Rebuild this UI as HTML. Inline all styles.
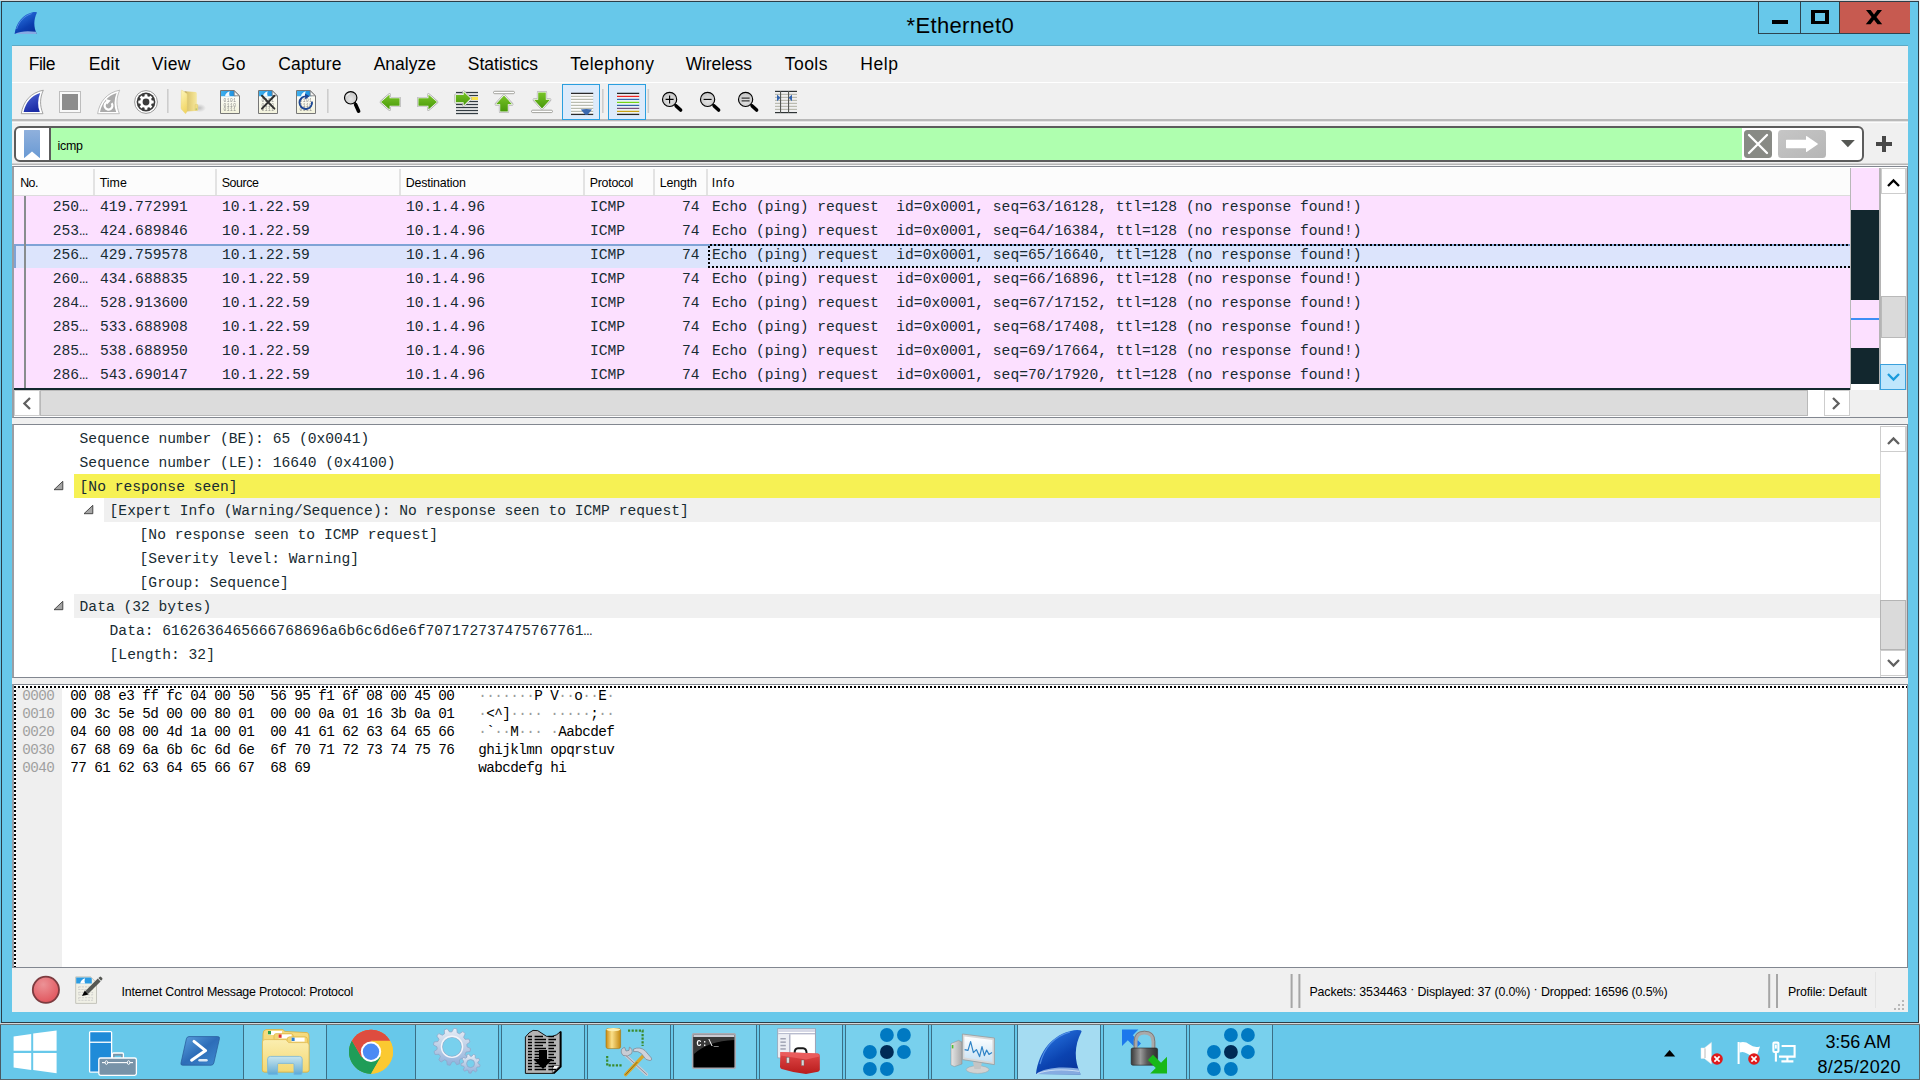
<!DOCTYPE html>
<html><head><meta charset="utf-8"><title>*Ethernet0</title>
<style>
*{box-sizing:border-box;margin:0;padding:0}
html,body{width:1920px;height:1080px;overflow:hidden;background:#67c8ea;font-family:"Liberation Sans",sans-serif;color:#000}
.a{position:absolute}
.t{position:absolute;white-space:pre;line-height:1}
.ui{font-family:"Liberation Sans",sans-serif;font-size:12.5px}
.menu .t{font-size:17.6px;top:54px;letter-spacing:-0.45px}
.mono{font-family:"Liberation Mono",monospace;font-size:14.64px;color:#172b32}
.hex{font-family:"Liberation Mono",monospace;font-size:14.3px;letter-spacing:-0.58px;color:#000}
.row{position:absolute;left:14px;width:1836px;height:24px;background:#fce0ff}
.row .t{top:4px}
.drow{position:absolute;height:24px;right:0}
.hdr .t{top:176px;font-size:12.3px;letter-spacing:-0.35px}
.sep{position:absolute;top:169px;width:1px;height:26px;background:#e2e2e2}
</style></head><body>
<!-- desktop / frame -->
<div class="a" style="left:0;top:0;width:1920px;height:1px;background:#d6d9db"></div>
<div class="a" style="left:1px;top:1px;width:1918px;height:1022px;border:1px solid #2b3d47;background:#67c8ea"></div>
<div class="a" style="left:1919px;top:0;width:1px;height:1024px;background:#f0f0f0"></div>
<!-- title -->
<div class="t" id="title" style="left:906.5px;top:15px;font-size:22px;letter-spacing:0.35px">*Ethernet0</div>
<!-- caption buttons -->
<div class="a" style="left:1758px;top:2px;width:152px;height:32px;border-left:1px solid #2d4450;border-bottom:1px solid #2d4450"></div>
<div class="a" style="left:1800px;top:2px;width:1px;height:31px;background:#2d4450"></div>
<div class="a" style="left:1839px;top:2px;width:71px;height:31px;background:#c75a50;border-left:1px solid #3a3a3a"></div>
<div class="a" style="left:1772px;top:20px;width:16px;height:4px;background:#000"></div>
<div class="a" style="left:1811px;top:10px;width:18px;height:14px;border:4px solid #000;border-top-width:3.5px;border-bottom-width:3.5px"></div>
<svg class="a" style="left:1864px;top:8px" width="20" height="18" viewBox="0 0 20 18"><path d="M2 2h4.6l3.4 4.4 3.4-4.4h4.6l-5.6 7 5.8 7.2h-4.7l-3.5-4.5-3.5 4.5H1.8l5.8-7.2z" fill="#000"/></svg>
<!-- client -->
<div class="a" id="client" style="left:12px;top:46px;width:1896px;height:966px;background:#f0f0f0"></div>
<div class="a" style="left:12px;top:45px;width:1896px;height:1px;background:#5ea9c4"></div>
<div class="a" style="left:12px;top:82px;width:1896px;height:1px;background:#fff"></div>
<div class="t" style="left:28.7px;top:56px;font-size:17.5px;letter-spacing:-0.467px;">File</div>
<div class="t" style="left:88.7px;top:56px;font-size:17.5px;letter-spacing:0.215px;">Edit</div>
<div class="t" style="left:151.7px;top:56px;font-size:17.5px;letter-spacing:0.394px;">View</div>
<div class="t" style="left:221.7px;top:56px;font-size:17.5px;letter-spacing:0.455px;">Go</div>
<div class="t" style="left:278.2px;top:56px;font-size:17.5px;letter-spacing:0.173px;">Capture</div>
<div class="t" style="left:373.7px;top:56px;font-size:17.5px;letter-spacing:0.007px;">Analyze</div>
<div class="t" style="left:467.7px;top:56px;font-size:17.5px;letter-spacing:0.031px;">Statistics</div>
<div class="t" style="left:570.2px;top:56px;font-size:17.5px;letter-spacing:0.502px;">Telephony</div>
<div class="t" style="left:685.7px;top:56px;font-size:17.5px;letter-spacing:-0.113px;">Wireless</div>
<div class="t" style="left:784.7px;top:56px;font-size:17.5px;letter-spacing:0.486px;">Tools</div>
<div class="t" style="left:860.2px;top:56px;font-size:17.5px;letter-spacing:0.602px;">Help</div>
<svg class="a" style="left:12px;top:10px" width="28" height="26" viewBox="0 0 28 26"><defs><linearGradient id="gtfin" x1="0.2" y1="0" x2="0.8" y2="1"><stop offset="0" stop-color="#2f7ae6"/><stop offset="0.65" stop-color="#0b3fb0"/><stop offset="1" stop-color="#08309a"/></linearGradient></defs><path d="M2.6 24 C4 13 10.6 4.4 21.4 2.1 Q25 1.6 25 2.6 C21.4 10 21.6 17 24.8 24 Z" fill="url(#gtfin)"/><path d="M2.6 24 C8 21 16 20.6 23.8 21.8 L24.8 24 Z" fill="#9cbfee" opacity=".85"/><path d="M4.6 19 C7 11.6 12 6 19.6 3.6" fill="none" stroke="#6aa6f2" stroke-width="0.9" opacity=".7"/></svg>
<svg class="a" style="left:0;top:0" width="1920" height="130" viewBox="0 0 1920 130"><defs>
<linearGradient id="gblue" x1="0" y1="0" x2="0.4" y2="1"><stop offset="0" stop-color="#5068d8"/><stop offset="1" stop-color="#1c2ca6"/></linearGradient>
<linearGradient id="ggreen" x1="0" y1="0" x2="0" y2="1"><stop offset="0" stop-color="#78c428"/><stop offset="1" stop-color="#48980a"/></linearGradient>
<linearGradient id="gpage" x1="0" y1="0" x2="0" y2="1"><stop offset="0" stop-color="#ffffff"/><stop offset="1" stop-color="#f3f3dc"/></linearGradient>
<linearGradient id="gband" x1="0" y1="0" x2="1" y2="0"><stop offset="0" stop-color="#3fb0ee"/><stop offset="1" stop-color="#1b8fe0"/></linearGradient>
<linearGradient id="gfold" x1="0" y1="0" x2="1" y2="0"><stop offset="0" stop-color="#a8924a"/><stop offset="0.25" stop-color="#dcc772"/><stop offset="0.7" stop-color="#eedc8a"/><stop offset="1" stop-color="#f4e8a4"/></linearGradient>
<linearGradient id="gfold2" x1="0" y1="0" x2="0.3" y2="1"><stop offset="0" stop-color="#fdf6ba"/><stop offset="1" stop-color="#f2d666"/></linearGradient>
<radialGradient id="glens" cx="0.5" cy="0.6" r="0.6"><stop offset="0" stop-color="#e6e6e6"/><stop offset="1" stop-color="#c2c2c2"/></radialGradient>
<radialGradient id="gshadow" cx="0.5" cy="0.5" r="0.5"><stop offset="0" stop-color="#000" stop-opacity="0.28"/><stop offset="1" stop-color="#000" stop-opacity="0"/></radialGradient>
</defs><rect x="12" y="119" width="1896" height="2" fill="#b9b9b9"/><rect x="12" y="121" width="1896" height="1" fill="#e4e4e4"/><rect x="12" y="122" width="1896" height="1" fill="#fbfbfb"/><rect x="167" y="89" width="1.6" height="24" fill="#cdcdcd"/><rect x="327" y="89" width="1.6" height="24" fill="#cdcdcd"/><rect x="602" y="89" width="1.6" height="24" fill="#cdcdcd"/><rect x="647.5" y="89" width="1.6" height="24" fill="#cdcdcd"/><rect x="562.5" y="84.5" width="37" height="35" fill="#ddebfb" stroke="#2a9fdf" stroke-width="1"/><rect x="608.5" y="84.5" width="37" height="35" fill="#ddebfb" stroke="#2a9fdf" stroke-width="1"/><g transform="translate(20.6,90)"><path d="M0.6 23.7 C2.6 11.5 10 2.6 22.7 0.2 C19.2 8 19 15.5 22.4 23.7 Z" fill="#fff" stroke="#9a9a9a" stroke-width="0.9" stroke-linejoin="round"/><path d="M3 22 C5 12.6 10.6 5.6 19.6 3 C17 9.5 16.8 16 19.2 22 Z" fill="url(#gblue)"/></g><rect x="59.5" y="91.5" width="21" height="21" fill="#f9f9f9" stroke="#bdbdbd" stroke-width="1"/><rect x="62" y="94" width="16" height="16" fill="#8c8c8c"/><g transform="translate(97,90)"><path d="M0.6 23.7 C2.6 11.5 10 2.6 22.7 0.2 C19.2 8 19 15.5 22.4 23.7 Z" fill="#fff" stroke="#b8b8b8" stroke-width="0.9" stroke-linejoin="round"/><path d="M3 22 C5 12.6 10.6 5.6 19.6 3 C17 9.5 16.8 16 19.2 22 Z" fill="#ababab"/></g><path d="M111.6 103.2 A3.9 3.9 0 1 1 107.4 101.9" fill="none" stroke="#fff" stroke-width="2.2"/><path d="M105.8 99 L110.8 100.6 L107 104.6 Z" fill="#fff"/><circle cx="146" cy="102" r="11.4" fill="#fff" stroke="#8e8e8e" stroke-width="0.9"/><circle cx="146" cy="102" r="9.4" fill="#3b3b3b"/><rect x="-1.4" y="-7.7" width="2.8" height="3.4" rx="0.4" fill="#fff" transform="translate(146 102) rotate(0)"/><rect x="-1.4" y="-7.7" width="2.8" height="3.4" rx="0.4" fill="#fff" transform="translate(146 102) rotate(45)"/><rect x="-1.4" y="-7.7" width="2.8" height="3.4" rx="0.4" fill="#fff" transform="translate(146 102) rotate(90)"/><rect x="-1.4" y="-7.7" width="2.8" height="3.4" rx="0.4" fill="#fff" transform="translate(146 102) rotate(135)"/><rect x="-1.4" y="-7.7" width="2.8" height="3.4" rx="0.4" fill="#fff" transform="translate(146 102) rotate(180)"/><rect x="-1.4" y="-7.7" width="2.8" height="3.4" rx="0.4" fill="#fff" transform="translate(146 102) rotate(225)"/><rect x="-1.4" y="-7.7" width="2.8" height="3.4" rx="0.4" fill="#fff" transform="translate(146 102) rotate(270)"/><rect x="-1.4" y="-7.7" width="2.8" height="3.4" rx="0.4" fill="#fff" transform="translate(146 102) rotate(315)"/><circle cx="146" cy="102" r="4.7" fill="none" stroke="#fff" stroke-width="2.6"/><ellipse cx="199.5" cy="108" rx="6.5" ry="4.2" fill="url(#gshadow)" opacity="0.7"/><path d="M184.5 91.2 L195.6 92 Q196.8 92.2 196.8 93.4 L196.8 110 Q196.8 111 195.8 111 L186 111.4 Z" fill="url(#gfold)"/><rect x="195" y="104.4" width="2.8" height="6" rx="0.6" fill="#f1dd84" stroke="#d9c262" stroke-width="0.4"/><rect x="195.6" y="108.6" width="1.4" height="1" fill="#8fb86a"/><path d="M181.3 90.6 Q181.3 90 182 90.2 L186.8 93.6 Q187.2 94 187.2 95 L187 111.6 L185.6 113.8 L181.4 109.2 Q181 108.6 181 107.6 Z" fill="url(#gfold2)" stroke="#e6d27a" stroke-width="0.4"/><g transform="translate(220,90)"><path d="M0.5 0.5H14.2L19.5 5.8V23.5H0.5Z" fill="url(#gpage)" stroke="#777" stroke-width="1"/><path d="M1 1H14L15.5 2.5V6.2H1Z" fill="url(#gband)"/><path d="M5 6.2C5.3 3.8 7 2 9.8 1.2C9 2.8 9 4.6 9.8 6.2Z" fill="#fff" opacity=".95"/><path d="M14.2 0.8V5.8H19.2Z" fill="#f4f4f4" stroke="#777" stroke-width="0.8" stroke-linejoin="round"/><text x="3.6" y="12" font-family="Liberation Mono, monospace" font-size="4.5" letter-spacing="0.5" fill="#777" opacity="0.85" style="filter:grayscale(1)">0101</text><text x="3.6" y="16.6" font-family="Liberation Mono, monospace" font-size="4.5" letter-spacing="0.5" fill="#777" opacity="0.85" style="filter:grayscale(1)">0110</text><text x="3.6" y="21.2" font-family="Liberation Mono, monospace" font-size="4.5" letter-spacing="0.5" fill="#777" opacity="0.85" style="filter:grayscale(1)">0111</text></g><g transform="translate(258,90)"><path d="M0.5 0.5H14.2L19.5 5.8V23.5H0.5Z" fill="url(#gpage)" stroke="#777" stroke-width="1"/><path d="M1 1H14L15.5 2.5V6.2H1Z" fill="url(#gband)"/><path d="M5 6.2C5.3 3.8 7 2 9.8 1.2C9 2.8 9 4.6 9.8 6.2Z" fill="#fff" opacity=".95"/><path d="M14.2 0.8V5.8H19.2Z" fill="#f4f4f4" stroke="#777" stroke-width="0.8" stroke-linejoin="round"/><text x="3.6" y="12" font-family="Liberation Mono, monospace" font-size="4.5" letter-spacing="0.5" fill="#777" opacity="0.85" style="filter:grayscale(1)">0101</text><text x="3.6" y="16.6" font-family="Liberation Mono, monospace" font-size="4.5" letter-spacing="0.5" fill="#777" opacity="0.85" style="filter:grayscale(1)">0110</text><text x="3.6" y="21.2" font-family="Liberation Mono, monospace" font-size="4.5" letter-spacing="0.5" fill="#777" opacity="0.85" style="filter:grayscale(1)">0111</text></g><path d="M262 95.8 L274.4 108.6 M274.4 95.8 L262 108.6" stroke="#303030" stroke-width="2" stroke-linecap="round"/><g transform="translate(296,90)"><path d="M0.5 0.5H14.2L19.5 5.8V23.5H0.5Z" fill="url(#gpage)" stroke="#777" stroke-width="1"/><path d="M1 1H14L15.5 2.5V6.2H1Z" fill="url(#gband)"/><path d="M5 6.2C5.3 3.8 7 2 9.8 1.2C9 2.8 9 4.6 9.8 6.2Z" fill="#fff" opacity=".95"/><path d="M14.2 0.8V5.8H19.2Z" fill="#f4f4f4" stroke="#777" stroke-width="0.8" stroke-linejoin="round"/><text x="3.6" y="12" font-family="Liberation Mono, monospace" font-size="4.5" letter-spacing="0.5" fill="#777" opacity="0.85" style="filter:grayscale(1)">0101</text><text x="3.6" y="16.6" font-family="Liberation Mono, monospace" font-size="4.5" letter-spacing="0.5" fill="#777" opacity="0.85" style="filter:grayscale(1)">0110</text><text x="3.6" y="21.2" font-family="Liberation Mono, monospace" font-size="4.5" letter-spacing="0.5" fill="#777" opacity="0.85" style="filter:grayscale(1)">0111</text></g><path d="M306.4 96.4 A6.3 6.3 0 1 0 312 101.6" fill="none" stroke="#1c4795" stroke-width="1.9"/><path d="M305 93.4 L309.6 96.2 L305.2 99.6 Z" fill="#1c4795"/><line x1="355.6" y1="104.6" x2="358.6" y2="111.2" stroke="#000" stroke-width="3.6" stroke-linecap="round"/><line x1="355.03999999999996" y1="102.14" x2="355.6" y2="104.6" stroke="#000" stroke-width="1.6"/><circle cx="350.7" cy="97.8" r="6.2" fill="url(#glens)" stroke="#000" stroke-width="1.15"/><path d="M346.6 96.4 A4.3 4.3 0 0 1 350 93.5" fill="none" stroke="#fff" stroke-width="1" opacity=".9"/><path d="M381 102 L389.6 94.6 L389.6 98.2 L399.6 98.2 L399.6 105.8 L389.6 105.8 L389.6 109.4 Z" fill="#fff" stroke="#9c9c9c" stroke-width="2.6" stroke-linejoin="round"/><path d="M381 102 L389.6 94.6 L389.6 98.2 L399.6 98.2 L399.6 105.8 L389.6 105.8 L389.6 109.4 Z" fill="#fff" stroke="#fff" stroke-width="1.5" stroke-linejoin="round"/><path d="M381 102 L389.6 94.6 L389.6 98.2 L399.6 98.2 L399.6 105.8 L389.6 105.8 L389.6 109.4 Z" fill="url(#ggreen)"/><path d="M437 102 L428.4 94.6 L428.4 98.2 L418.4 98.2 L418.4 105.8 L428.4 105.8 L428.4 109.4 Z" fill="#fff" stroke="#9c9c9c" stroke-width="2.6" stroke-linejoin="round"/><path d="M437 102 L428.4 94.6 L428.4 98.2 L418.4 98.2 L418.4 105.8 L428.4 105.8 L428.4 109.4 Z" fill="#fff" stroke="#fff" stroke-width="1.5" stroke-linejoin="round"/><path d="M437 102 L428.4 94.6 L428.4 98.2 L418.4 98.2 L418.4 105.8 L428.4 105.8 L428.4 109.4 Z" fill="url(#ggreen)"/><rect x="456" y="91.9" width="22" height="1.25" fill="#333c42"/><rect x="456" y="94.9" width="22" height="1.25" fill="#333c42"/><rect x="456" y="97.9" width="22" height="1.25" fill="#333c42"/><rect x="456" y="100.9" width="22" height="1.25" fill="#333c42"/><rect x="456" y="103.9" width="22" height="1.25" fill="#333c42"/><rect x="456" y="106.9" width="22" height="1.25" fill="#333c42"/><rect x="456" y="109.9" width="22" height="1.25" fill="#333c42"/><rect x="456" y="112.9" width="22" height="1.25" fill="#333c42"/><rect x="471" y="97" width="7" height="3" fill="#f8e34c"/><path d="M470.6 98.6 L463.6 91.8 L463.6 95 L455.8 95 L455.8 102.2 L463.6 102.2 L463.6 105.4 Z" fill="#fff" stroke="#9c9c9c" stroke-width="2.6" stroke-linejoin="round"/><path d="M470.6 98.6 L463.6 91.8 L463.6 95 L455.8 95 L455.8 102.2 L463.6 102.2 L463.6 105.4 Z" fill="#fff" stroke="#fff" stroke-width="1.5" stroke-linejoin="round"/><path d="M470.6 98.6 L463.6 91.8 L463.6 95 L455.8 95 L455.8 102.2 L463.6 102.2 L463.6 105.4 Z" fill="url(#ggreen)"/><rect x="493.5" y="91.3" width="21" height="2.4" rx="1.2" fill="#fff" stroke="#8d8d86" stroke-width="0.8"/><path d="M504 95.6 L512 104.2 L507.8 104.2 L507.8 111.4 L500.2 111.4 L500.2 104.2 L496 104.2 Z" fill="#fff" stroke="#9c9c9c" stroke-width="2.6" stroke-linejoin="round"/><path d="M504 95.6 L512 104.2 L507.8 104.2 L507.8 111.4 L500.2 111.4 L500.2 104.2 L496 104.2 Z" fill="#fff" stroke="#fff" stroke-width="1.5" stroke-linejoin="round"/><path d="M504 95.6 L512 104.2 L507.8 104.2 L507.8 111.4 L500.2 111.4 L500.2 104.2 L496 104.2 Z" fill="url(#ggreen)"/><rect x="531.5" y="110.2" width="21" height="2.4" rx="1.2" fill="#fff" stroke="#8d8d86" stroke-width="0.8"/><path d="M542 108.4 L550 99.8 L545.8 99.8 L545.8 92.6 L538.2 92.6 L538.2 99.8 L534 99.8 Z" fill="#fff" stroke="#9c9c9c" stroke-width="2.6" stroke-linejoin="round"/><path d="M542 108.4 L550 99.8 L545.8 99.8 L545.8 92.6 L538.2 92.6 L538.2 99.8 L534 99.8 Z" fill="#fff" stroke="#fff" stroke-width="1.5" stroke-linejoin="round"/><path d="M542 108.4 L550 99.8 L545.8 99.8 L545.8 92.6 L538.2 92.6 L538.2 99.8 L534 99.8 Z" fill="url(#ggreen)"/><rect x="571" y="93" width="22" height="22" fill="#fff"/><rect x="571" y="92.75" width="22.2" height="1.3" fill="#2a2a2a"/><rect x="571" y="95.75" width="22.2" height="1.3" fill="#b9bcb0"/><rect x="571" y="98.75" width="22.2" height="1.3" fill="#b9bcb0"/><rect x="571" y="101.75" width="22.2" height="1.3" fill="#b9bcb0"/><rect x="571" y="104.75" width="22.2" height="1.3" fill="#b9bcb0"/><rect x="571" y="107.75" width="22.2" height="1.3" fill="#b9bcb0"/><rect x="571" y="110.75" width="22.2" height="1.3" fill="#b9bcb0"/><rect x="571" y="113.75" width="22.2" height="1.3" fill="#2a2a2a"/><path d="M580.8 109.4 Q586.4 108.6 592 109.4 L587.6 114.8 L585.2 114.8 Z" fill="#3969b1"/><rect x="617" y="93" width="22" height="22" fill="#fff" opacity=".6"/><rect x="617" y="92.75" width="22.2" height="1.3" fill="#242424"/><rect x="617" y="95.75" width="22.2" height="1.3" fill="#ea2222"/><rect x="617" y="98.75" width="22.2" height="1.3" fill="#3465ae"/><rect x="617" y="101.75" width="22.2" height="1.3" fill="#73d216"/><rect x="617" y="104.75" width="22.2" height="1.3" fill="#3465a4"/><rect x="617" y="107.75" width="22.2" height="1.3" fill="#75507b"/><rect x="617" y="110.75" width="22.2" height="1.3" fill="#c8a214"/><rect x="617" y="113.75" width="22.2" height="1.3" fill="#242424"/><line x1="676.2" y1="106" x2="680.6" y2="110" stroke="#000" stroke-width="3.6" stroke-linecap="round"/><line x1="674.57" y1="104.37" x2="676.2" y2="106" stroke="#000" stroke-width="1.6"/><circle cx="669.6" cy="99.4" r="7.1" fill="url(#glens)" stroke="#000" stroke-width="1.15"/><path d="M665.6 99.4H673.6M669.6 95.4V103.4" stroke="#000" stroke-width="1.1"/><line x1="714.2" y1="106" x2="718.6" y2="110" stroke="#000" stroke-width="3.6" stroke-linecap="round"/><line x1="712.57" y1="104.37" x2="714.2" y2="106" stroke="#000" stroke-width="1.6"/><circle cx="707.6" cy="99.4" r="7.1" fill="url(#glens)" stroke="#000" stroke-width="1.15"/><path d="M703.6 99.4H711.6" stroke="#000" stroke-width="1.1"/><line x1="752.2" y1="106" x2="756.6" y2="110" stroke="#000" stroke-width="3.6" stroke-linecap="round"/><line x1="750.57" y1="104.37" x2="752.2" y2="106" stroke="#000" stroke-width="1.6"/><circle cx="745.6" cy="99.4" r="7.1" fill="url(#glens)" stroke="#000" stroke-width="1.15"/><path d="M741.6 98.1H749.6M741.6 100.9H749.6" stroke="#000" stroke-width="0.95"/><rect x="775" y="93.80000000000001" width="22" height="1.2" fill="#babbb0"/><rect x="775" y="96.80000000000001" width="22" height="1.2" fill="#babbb0"/><rect x="775" y="99.80000000000001" width="22" height="1.2" fill="#babbb0"/><rect x="775" y="102.80000000000001" width="22" height="1.2" fill="#babbb0"/><rect x="775" y="105.80000000000001" width="22" height="1.2" fill="#babbb0"/><rect x="775" y="108.80000000000001" width="22" height="1.2" fill="#babbb0"/><rect x="775" y="90.8" width="22" height="1.2" fill="#2e3436"/><rect x="775" y="112" width="22" height="1.2" fill="#2e3436"/><rect x="780" y="91" width="1.1" height="22" fill="#555753"/><rect x="788" y="91" width="1.1" height="22" fill="#555753"/><path d="M777 94.4 L780.4 97.8 L777 101.2 Z" fill="#3465b0"/><path d="M792 94.4 L788.6 97.8 L792 101.2 Z" fill="#3465b0"/></svg>

<div class="a" style="left:14px;top:126px;width:1850px;height:36px;border:2px solid #5c5c5c;border-radius:6px;background:#fff;overflow:hidden"><div class="a" style="left:33px;top:0;width:2px;height:32px;background:#5c5c5c"></div><div class="a" style="left:35px;top:0;width:1691px;height:32px;background:#afffaf"></div></div><svg class="a" style="left:0;top:120px" width="1920" height="50" viewBox="0 120 1920 50"><defs><linearGradient id="gbm" x1="0" y1="0" x2="0" y2="1"><stop offset="0" stop-color="#8fb0dc"/><stop offset="1" stop-color="#6a9ad4"/></linearGradient><linearGradient id="gapply" x1="0" y1="0" x2="1" y2="1"><stop offset="0" stop-color="#c6c6c6"/><stop offset="1" stop-color="#b6b6b6"/></linearGradient></defs><path d="M24 130.4 Q24 130 24.4 130 H39.6 Q40 130 40 130.4 V157.4 Q40 158.2 39.4 157.7 L32 151.6 L24.6 157.7 Q24 158.2 24 157.4 Z" fill="url(#gbm)"/><rect x="1744" y="130" width="28" height="28" rx="3.5" fill="#888a85"/><path d="M1749 135 L1767 153 M1767 135 L1749 153" stroke="#fff" stroke-width="2.3" stroke-linecap="round"/><rect x="1778" y="130" width="48" height="28" rx="3.5" fill="url(#gapply)"/><path d="M1786.6 139.8 H1806 V136.6 Q1806 135.6 1806.9 136.2 L1817.6 143.4 Q1818.2 144 1817.6 144.5 L1806.9 151.8 Q1806 152.4 1806 151.4 V148.2 H1786.6 Q1786 148.2 1786 147.6 V140.4 Q1786 139.8 1786.6 139.8 Z" fill="#fff"/><path d="M1841 140 H1854.8 L1847.9 147.3 Z" fill="#555753"/><path d="M1876 142 H1882 V136 H1886 V142 H1892 V146 H1886 V152 H1882 V146 H1876 Z" fill="#484848"/><rect x="12" y="163.5" width="1896" height="1.6" fill="#b6b6b6"/><rect x="12" y="165.1" width="1896" height="1" fill="#f8f8f8"/></svg><div class="t" style="left:57.6px;top:140px;font-size:12.4px;letter-spacing:-0.260px;">icmp</div>

<div class="a" style="left:12px;top:166px;width:1896px;height:252px;background:#fff;border:1px solid #828790;border-left:2px solid #9a9ea4"></div><div class="a" style="left:14px;top:168px;width:1836px;height:27px;background:#fcfcfc"></div><div class="a" style="left:14px;top:195px;width:1836px;height:1px;background:#dcdcdc"></div><div class="hdr"><div class="a" style="left:93px;top:169px;width:2px;height:26px;background:#e3e3e3"></div><div class="a" style="left:215px;top:169px;width:2px;height:26px;background:#e3e3e3"></div><div class="a" style="left:399px;top:169px;width:2px;height:26px;background:#e3e3e3"></div><div class="a" style="left:583px;top:169px;width:2px;height:26px;background:#e3e3e3"></div><div class="a" style="left:653px;top:169px;width:2px;height:26px;background:#e3e3e3"></div><div class="a" style="left:706px;top:169px;width:2px;height:26px;background:#e3e3e3"></div><div class="t" style="left:20.2px;top:177px;font-size:12.4px;letter-spacing:-0.548px;">No.</div><div class="t" style="left:99.7px;top:177px;font-size:12.4px;letter-spacing:0.035px;">Time</div><div class="t" style="left:221.7px;top:177px;font-size:12.4px;letter-spacing:-0.418px;">Source</div><div class="t" style="left:405.7px;top:177px;font-size:12.4px;letter-spacing:-0.184px;">Destination</div><div class="t" style="left:589.7px;top:177px;font-size:12.4px;letter-spacing:-0.256px;">Protocol</div><div class="t" style="left:659.7px;top:177px;font-size:12.4px;letter-spacing:-0.146px;">Length</div><div class="t" style="left:711.7px;top:177px;font-size:12.4px;letter-spacing:0.672px;">Info</div></div><div class="row mono" style="top:196px;height:24px;background:#fce0ff;overflow:hidden"><div class="t" style="left:38.8px">250…</div><div class="t" style="left:86px">419.772991</div><div class="t" style="left:208px">10.1.22.59</div><div class="t" style="left:392px">10.1.4.96</div><div class="t" style="left:576px">ICMP</div><div class="t" style="left:668px">74</div><div class="t" style="left:698px">Echo (ping) request  id=0x0001, seq=63/16128, ttl=128 (no response found!)</div></div><div class="row mono" style="top:220px;height:24px;background:#fce0ff;overflow:hidden"><div class="t" style="left:38.8px">253…</div><div class="t" style="left:86px">424.689846</div><div class="t" style="left:208px">10.1.22.59</div><div class="t" style="left:392px">10.1.4.96</div><div class="t" style="left:576px">ICMP</div><div class="t" style="left:668px">74</div><div class="t" style="left:698px">Echo (ping) request  id=0x0001, seq=64/16384, ttl=128 (no response found!)</div></div><div class="row mono" style="top:244px;height:24px;background:#dce4fc;overflow:hidden"><div class="a" style="left:0;top:0;width:1836px;height:2px;background:#7fa3d6"></div><div class="a" style="left:0;top:0;width:2px;height:24px;background:#7fa3d6"></div><div class="t" style="left:38.8px">256…</div><div class="t" style="left:86px">429.759578</div><div class="t" style="left:208px">10.1.22.59</div><div class="t" style="left:392px">10.1.4.96</div><div class="t" style="left:576px">ICMP</div><div class="t" style="left:668px">74</div><div class="t" style="left:698px">Echo (ping) request  id=0x0001, seq=65/16640, ttl=128 (no response found!)</div></div><div class="row mono" style="top:268px;height:24px;background:#fce0ff;overflow:hidden"><div class="t" style="left:38.8px">260…</div><div class="t" style="left:86px">434.688835</div><div class="t" style="left:208px">10.1.22.59</div><div class="t" style="left:392px">10.1.4.96</div><div class="t" style="left:576px">ICMP</div><div class="t" style="left:668px">74</div><div class="t" style="left:698px">Echo (ping) request  id=0x0001, seq=66/16896, ttl=128 (no response found!)</div></div><div class="row mono" style="top:292px;height:24px;background:#fce0ff;overflow:hidden"><div class="t" style="left:38.8px">284…</div><div class="t" style="left:86px">528.913600</div><div class="t" style="left:208px">10.1.22.59</div><div class="t" style="left:392px">10.1.4.96</div><div class="t" style="left:576px">ICMP</div><div class="t" style="left:668px">74</div><div class="t" style="left:698px">Echo (ping) request  id=0x0001, seq=67/17152, ttl=128 (no response found!)</div></div><div class="row mono" style="top:316px;height:24px;background:#fce0ff;overflow:hidden"><div class="t" style="left:38.8px">285…</div><div class="t" style="left:86px">533.688908</div><div class="t" style="left:208px">10.1.22.59</div><div class="t" style="left:392px">10.1.4.96</div><div class="t" style="left:576px">ICMP</div><div class="t" style="left:668px">74</div><div class="t" style="left:698px">Echo (ping) request  id=0x0001, seq=68/17408, ttl=128 (no response found!)</div></div><div class="row mono" style="top:340px;height:24px;background:#fce0ff;overflow:hidden"><div class="t" style="left:38.8px">285…</div><div class="t" style="left:86px">538.688950</div><div class="t" style="left:208px">10.1.22.59</div><div class="t" style="left:392px">10.1.4.96</div><div class="t" style="left:576px">ICMP</div><div class="t" style="left:668px">74</div><div class="t" style="left:698px">Echo (ping) request  id=0x0001, seq=69/17664, ttl=128 (no response found!)</div></div><div class="row mono" style="top:364px;height:24px;background:#fce0ff;overflow:hidden"><div class="t" style="left:38.8px">286…</div><div class="t" style="left:86px">543.690147</div><div class="t" style="left:208px">10.1.22.59</div><div class="t" style="left:392px">10.1.4.96</div><div class="t" style="left:576px">ICMP</div><div class="t" style="left:668px">74</div><div class="t" style="left:698px">Echo (ping) request  id=0x0001, seq=70/17920, ttl=128 (no response found!)</div></div><div class="a" style="left:24px;top:196px;width:2px;height:192px;background:#888c8e"></div><div class="a" style="left:710px;top:244px;width:1140px;height:2px;background:repeating-linear-gradient(90deg,#000 0,#000 2px,transparent 2px,transparent 4px)"></div><div class="a" style="left:708px;top:266px;width:1142px;height:2px;background:repeating-linear-gradient(90deg,#000 0,#000 2px,transparent 2px,transparent 4px)"></div><div class="a" style="left:708px;top:246px;width:2px;height:20px;background:repeating-linear-gradient(180deg,#000 0,#000 2px,transparent 2px,transparent 4px)"></div><div class="a" style="left:14px;top:388px;width:1836px;height:2px;background:#12272e"></div><div class="a" style="left:1850px;top:168px;width:1px;height:222px;background:#b8b8b8"></div><div class="a" style="left:1851px;top:168px;width:28px;height:222px;background:#fff"></div><div class="a" style="left:1851px;top:168px;width:28px;height:42px;background:#fce0ff"></div><div class="a" style="left:1851px;top:210px;width:28px;height:89.5px;background:#12272e"></div><div class="a" style="left:1851px;top:299.5px;width:28px;height:48.0px;background:#fce0ff"></div><div class="a" style="left:1851px;top:318px;width:28px;height:1.6000000000000227px;background:#3d8ef5"></div><div class="a" style="left:1851px;top:347.5px;width:28px;height:36.5px;background:#12272e"></div><div class="a" style="left:1879px;top:168px;width:2px;height:222px;background:#b4b4b4"></div><div class="a" style="left:1881px;top:168px;width:26px;height:222px;background:#fff;border-right:1px solid #d0d0d0"></div><div class="a" style="left:1881px;top:168px;width:25px;height:26px;background:#fff;border:1px solid #cdcdcd"></div><div class="a" style="left:1881px;top:296px;width:25px;height:42px;background:#dadada;border:1px solid #b9b9b9"></div><div class="a" style="left:1880px;top:364px;width:26px;height:26px;background:#bfe6fc;border:1px solid #3aa0dc"></div><div class="a" style="left:14px;top:390px;width:1836px;height:26px;background:#fff"></div><div class="a" style="left:14px;top:390px;width:26px;height:26px;background:#fff;border:1px solid #cdcdcd"></div><div class="a" style="left:40px;top:390px;width:1768px;height:26px;background:#dcdcdc;border:1px solid #b9b9b9"></div><div class="a" style="left:1824px;top:390px;width:26px;height:26px;background:#fff;border:1px solid #cdcdcd"></div><div class="a" style="left:1850px;top:390px;width:57px;height:27px;background:#f0f0f0"></div><svg class="a" style="left:0;top:160px" width="1920" height="270" viewBox="0 160 1920 270" fill="none" stroke-width="2.3"><path d="M1888 186 L1893.5 180.5 L1899 186" stroke="#000"/><path d="M1888 374 L1893.5 379.5 L1899 374" stroke="#1a9bdc"/><path d="M30 398 L24.4 403.5 L30 409" stroke="#606060"/><path d="M1833 398 L1838.6 403.5 L1833 409" stroke="#606060"/></svg>

<div class="a" style="left:12px;top:424px;width:1896px;height:254px;background:#fff;border:1px solid #828790;border-left:2px solid #9a9ea4"></div><div class="t mono" style="left:79.6px;top:432px">Sequence number (BE): 65 (0x0041)</div><div class="t mono" style="left:79.6px;top:456px">Sequence number (LE): 16640 (0x4100)</div><div class="a" style="left:74px;top:474px;width:1806px;height:24px;background:#f6f154"></div><div class="t mono" style="left:79.6px;top:480px">[No response seen]</div><div class="a" style="left:104px;top:498px;width:1776px;height:24px;background:#f0f0f0"></div><div class="t mono" style="left:109.6px;top:504px">[Expert Info (Warning/Sequence): No response seen to ICMP request]</div><div class="t mono" style="left:139.6px;top:528px">[No response seen to ICMP request]</div><div class="t mono" style="left:139.6px;top:552px">[Severity level: Warning]</div><div class="t mono" style="left:139.6px;top:576px">[Group: Sequence]</div><div class="a" style="left:74px;top:594px;width:1806px;height:24px;background:#f0f0f0"></div><div class="t mono" style="left:79.6px;top:600px">Data (32 bytes)</div><div class="t mono" style="left:109.6px;top:624px">Data<span>:</span> 6162636465666768696a6b6c6d6e6f707172737475767761…</div><div class="t mono" style="left:109.6px;top:648px">[Length: 32]</div><div class="a" style="left:1880px;top:426px;width:27px;height:251px;background:#fff;border-left:1px solid #d6d6d6;border-right:1px solid #d0d0d0"></div><div class="a" style="left:1880px;top:426px;width:26px;height:26px;border:1px solid #cdcdcd"></div><div class="a" style="left:1880px;top:600px;width:26px;height:50px;background:#dadada;border:1px solid #b4b4b4"></div><div class="a" style="left:1880px;top:650px;width:26px;height:26px;border:1px solid #cdcdcd"></div><svg class="a" style="left:0;top:420px" width="1920" height="270" viewBox="0 420 1920 270"><path d="M62.8 481.3 V489.7 H54.0 Z" fill="#a6a6a6" stroke="#3c3c3c" stroke-width="0.9" stroke-linejoin="miter"/><path d="M92.8 505.30000000000007 V513.7 H84.0 Z" fill="#a6a6a6" stroke="#3c3c3c" stroke-width="0.9" stroke-linejoin="miter"/><path d="M62.8 601.3000000000001 V609.7 H54.0 Z" fill="#a6a6a6" stroke="#3c3c3c" stroke-width="0.9" stroke-linejoin="miter"/><path d="M1888 444 L1893.5 438.5 L1899 444" stroke="#606060" fill="none" stroke-width="2.3"/><path d="M1888 660 L1893.5 665.5 L1899 660" stroke="#606060" fill="none" stroke-width="2.3"/></svg>

<div class="a" style="left:12px;top:684px;width:1896px;height:284px;background:#fff;border:1px solid #828790;border-left:2px solid #9a9ea4"></div><div class="a" style="left:16px;top:688px;width:46px;height:279px;background:#efefef"></div><div class="a" style="left:14px;top:686px;width:1893px;height:2px;background:repeating-linear-gradient(90deg,#000 0,#000 2px,transparent 2px,transparent 4px)"></div><div class="a" style="left:14px;top:686px;width:2px;height:281px;background:repeating-linear-gradient(180deg,#000 0,#000 2px,transparent 2px,transparent 4px)"></div><div class="t hex" style="left:22.3px;top:689px;color:#a0a0a0">0000</div><div class="t hex" style="left:70.3px;top:689px">00 08 e3 ff fc 04 00 50  56 95 f1 6f 08 00 45 00</div><div class="t hex" style="left:478.3px;top:689px"><span style="color:#9c9c9c">·······</span>P V<span style="color:#9c9c9c">··</span>o<span style="color:#9c9c9c">··</span>E<span style="color:#9c9c9c">·</span></div><div class="t hex" style="left:22.3px;top:707px;color:#a0a0a0">0010</div><div class="t hex" style="left:70.3px;top:707px">00 3c 5e 5d 00 00 80 01  00 00 0a 01 16 3b 0a 01</div><div class="t hex" style="left:478.3px;top:707px"><span style="color:#9c9c9c">·</span>&lt;^]<span style="color:#9c9c9c">····</span> <span style="color:#9c9c9c">·····</span>;<span style="color:#9c9c9c">··</span></div><div class="t hex" style="left:22.3px;top:725px;color:#a0a0a0">0020</div><div class="t hex" style="left:70.3px;top:725px">04 60 08 00 4d 1a 00 01  00 41 61 62 63 64 65 66</div><div class="t hex" style="left:478.3px;top:725px"><span style="color:#9c9c9c">·</span>`<span style="color:#9c9c9c">··</span>M<span style="color:#9c9c9c">···</span> <span style="color:#9c9c9c">·</span>Aabcdef</div><div class="t hex" style="left:22.3px;top:743px;color:#a0a0a0">0030</div><div class="t hex" style="left:70.3px;top:743px">67 68 69 6a 6b 6c 6d 6e  6f 70 71 72 73 74 75 76</div><div class="t hex" style="left:478.3px;top:743px">ghijklmn opqrstuv</div><div class="t hex" style="left:22.3px;top:761px;color:#a0a0a0">0040</div><div class="t hex" style="left:70.3px;top:761px">77 61 62 63 64 65 66 67  68 69</div><div class="t hex" style="left:478.3px;top:761px">wabcdefg hi</div>

<svg class="a" style="left:0;top:968px" width="1920" height="46" viewBox="0 968 1920 46"><defs><radialGradient id="gred" cx="0.4" cy="0.3" r="0.75"><stop offset="0" stop-color="#ec9296"/><stop offset="1" stop-color="#e0525a"/></radialGradient></defs><circle cx="45.9" cy="989.8" r="13.1" fill="url(#gred)" stroke="#7c3c40" stroke-width="1.8"/><g transform="translate(75.2,976.4)"><path d="M0.5 0.5H15.5L21.3 6.3V27H0.5Z" fill="#f0f0e6" stroke="#c4c4bc" stroke-width="1"/><path d="M1 1H15.4L16.6 2.2V7H1Z" fill="#2b9be2"/><path d="M5 7C5.3 4.6 7.2 2.6 10 1.8C9.2 3.6 9.2 5.4 10 7Z" fill="#fff"/><rect x="3.4" y="10.5" width="14" height="2.6" fill="none" stroke="#c2c2c2" stroke-width="0.7" stroke-dasharray="2.2 1"/><rect x="3.4" y="15.899999999999999" width="14" height="2.6" fill="none" stroke="#c2c2c2" stroke-width="0.7" stroke-dasharray="2.2 1"/><rect x="3.4" y="21.3" width="14" height="2.6" fill="none" stroke="#c2c2c2" stroke-width="0.7" stroke-dasharray="2.2 1"/><path d="M10.2 14.6 L22.6 2.2 L25.4 5 L13 17.4 Z" fill="#555753"/><path d="M23.2 1.6 L24.4 0.5 Q25.2 -0.1 25.9 0.6 L27 1.7 Q27.6 2.5 27 3.2 L25.9 4.4 Z" fill="#555753"/><path d="M6.8 19.6 L9.6 14.2 L13.4 18 Z" fill="#000"/></g><rect x="1290.6" y="974" width="2" height="34" fill="#a6a6a6"/><rect x="1298.4" y="974" width="2" height="34" fill="#a6a6a6"/><rect x="1768.2" y="974" width="2" height="34" fill="#a6a6a6"/><rect x="1776" y="974" width="2" height="34" fill="#a6a6a6"/><rect x="1875" y="972" width="1" height="36" fill="#e4e4e4"/><rect x="1902" y="1008" width="2" height="2" fill="#b8b8b8"/><rect x="1898" y="1008" width="2" height="2" fill="#b8b8b8"/><rect x="1894" y="1008" width="2" height="2" fill="#b8b8b8"/><rect x="1902" y="1004" width="2" height="2" fill="#b8b8b8"/><rect x="1898" y="1004" width="2" height="2" fill="#b8b8b8"/><rect x="1902" y="1000" width="2" height="2" fill="#b8b8b8"/></svg><div class="t" style="left:121.6px;top:986px;font-size:12.4px;letter-spacing:-0.208px;">Internet Control Message Protocol: Protocol</div><div class="t" style="left:1309.4px;top:986px;font-size:12.4px;letter-spacing:-0.112px">Packets: 3534463 <span style="position:relative;top:-3px">·</span> Displayed: 37 (0.0%) <span style="position:relative;top:-3px">·</span> Dropped: 16596 (0.5%)</div><div class="t" style="left:1788.0px;top:986px;font-size:12.4px;letter-spacing:-0.155px;">Profile: Default</div>

<div class="a" style="left:0;top:1023px;width:1920px;height:1px;background:#d4d8da"></div><div class="a" style="left:0;top:1024px;width:1920px;height:1px;background:#6c7478"></div><div class="a" style="left:0;top:1025px;width:1920px;height:55px;background:#67c8ea;border-left:1px solid #4a5a62;border-right:1px solid #58666c;border-bottom:1px solid #58666c"></div><div class="a" style="left:243px;top:1025px;width:84px;height:54px;background:#78d0ed;border-left:1px solid #3b6f86;border-right:1px solid #3b6f86"></div><div class="a" style="left:415px;top:1025px;width:84px;height:54px;background:#78d0ed;border-left:1px solid #3b6f86;border-right:1px solid #3b6f86"></div><div class="a" style="left:501px;top:1025px;width:84px;height:54px;background:#78d0ed;border-left:1px solid #3b6f86;border-right:1px solid #3b6f86"></div><div class="a" style="left:587px;top:1025px;width:84px;height:54px;background:#78d0ed;border-left:1px solid #3b6f86;border-right:1px solid #3b6f86"></div><div class="a" style="left:673px;top:1025px;width:84px;height:54px;background:#78d0ed;border-left:1px solid #3b6f86;border-right:1px solid #3b6f86"></div><div class="a" style="left:759px;top:1025px;width:84px;height:54px;background:#78d0ed;border-left:1px solid #3b6f86;border-right:1px solid #3b6f86"></div><div class="a" style="left:845px;top:1025px;width:84px;height:54px;background:#78d0ed;border-left:1px solid #3b6f86;border-right:1px solid #3b6f86"></div><div class="a" style="left:931px;top:1025px;width:84px;height:54px;background:#78d0ed;border-left:1px solid #3b6f86;border-right:1px solid #3b6f86"></div><div class="a" style="left:1017px;top:1025px;width:84px;height:54px;background:#a5dcf2;border-left:1px solid #3b6f86;border-right:1px solid #3b6f86"></div><div class="a" style="left:1103px;top:1025px;width:84px;height:54px;background:#78d0ed;border-left:1px solid #3b6f86;border-right:1px solid #3b6f86"></div><div class="a" style="left:1189px;top:1025px;width:84px;height:54px;background:#78d0ed;border-left:1px solid #3b6f86;border-right:1px solid #3b6f86"></div><svg class="a" style="left:0;top:1020px" width="1920" height="60" viewBox="0 1020 1920 60"><defs>
<linearGradient id="tps" x1="0" y1="0" x2="1" y2="1"><stop offset="0" stop-color="#5da2e0"/><stop offset="0.5" stop-color="#2d6db8"/><stop offset="1" stop-color="#3f8ad0"/></linearGradient>
<linearGradient id="tfold" x1="0" y1="0" x2="0" y2="1"><stop offset="0" stop-color="#f5dc82"/><stop offset="1" stop-color="#f1cf62"/></linearGradient>
<linearGradient id="tfold2" x1="0" y1="0" x2="0" y2="1"><stop offset="0" stop-color="#fbeeb0"/><stop offset="1" stop-color="#f3d873"/></linearGradient>
<linearGradient id="tfblue" x1="0" y1="0" x2="0" y2="1"><stop offset="0" stop-color="#c4e6f6"/><stop offset="1" stop-color="#58a8dc"/></linearGradient>
<linearGradient id="tgear" x1="0" y1="0" x2="0" y2="1"><stop offset="0" stop-color="#e8eef6"/><stop offset="0.55" stop-color="#b9cbe4"/><stop offset="1" stop-color="#8fb0dc"/></linearGradient>
<linearGradient id="tfin" x1="0.2" y1="0" x2="0.8" y2="1"><stop offset="0" stop-color="#2a78e4"/><stop offset="0.6" stop-color="#0b43b0"/><stop offset="1" stop-color="#08349a"/></linearGradient>
<linearGradient id="tlock" x1="0" y1="0" x2="1" y2="0"><stop offset="0" stop-color="#3a3a3a"/><stop offset="0.35" stop-color="#9a9a9a"/><stop offset="0.6" stop-color="#5a5a5a"/><stop offset="1" stop-color="#2e2e2e"/></linearGradient>
<linearGradient id="tred" x1="0" y1="0" x2="0" y2="1"><stop offset="0" stop-color="#e24a4a"/><stop offset="1" stop-color="#b81c1c"/></linearGradient>
<linearGradient id="tgold" x1="0" y1="0" x2="1" y2="0"><stop offset="0" stop-color="#c88a10"/><stop offset="0.4" stop-color="#fbe08a"/><stop offset="1" stop-color="#c48810"/></linearGradient>
<linearGradient id="tscr" x1="0" y1="0" x2="0" y2="1"><stop offset="0" stop-color="#ffffff"/><stop offset="1" stop-color="#c8e2f4"/></linearGradient>
<linearGradient id="tsilver" x1="0" y1="0" x2="1" y2="0"><stop offset="0" stop-color="#e6e6e6"/><stop offset="1" stop-color="#a8a8a8"/></linearGradient>
</defs><path d="M13.6 1036.4 L31.2 1033.9 V1050.8 H13.6 Z M33.2 1033.6 L56.6 1030.4 V1050.8 H33.2 Z M13.6 1053 H31.2 V1069.9 L13.6 1067.4 Z M33.2 1053 H56.6 V1073.3 L33.2 1070.1 Z" fill="#fff"/><rect x="89.6" y="1031.6" width="22" height="40.6" rx="1" fill="#1f8bd8" stroke="#fff" stroke-width="1.3"/><rect x="89.6" y="1041.6" width="22" height="1.3" fill="#fff"/><rect x="112.4" y="1053" width="11" height="6" rx="1" fill="#7893a8" stroke="#fff" stroke-width="1.3"/><rect x="114.6" y="1055.6" width="6.6" height="2.4" fill="#67c8ea"/><rect x="98.8" y="1058" width="37.6" height="17.4" rx="1.8" fill="#7893a8" stroke="#fff" stroke-width="1.3"/><path d="M102 1062.6 H133" stroke="#fff" stroke-width="1.1"/><ellipse cx="106.4" cy="1062.6" rx="1.2" ry="1.9" fill="#7893a8" stroke="#fff" stroke-width="0.9"/><ellipse cx="128.6" cy="1062.6" rx="1.2" ry="1.9" fill="#7893a8" stroke="#fff" stroke-width="0.9"/><path d="M189 1036.6 H217.6 Q220 1036.6 219.4 1038.8 L213.8 1063 Q213.2 1065.2 211 1065.2 H182.6 Q180.4 1065.2 181 1063 L186.4 1038.8 Q187 1036.6 189 1036.6 Z" fill="url(#tps)" stroke="#2a5f9e" stroke-width="0.8"/><path d="M194 1041.4 L205.6 1050.6 L191.6 1060.2" fill="none" stroke="#fff" stroke-width="3" stroke-linecap="round" stroke-linejoin="round"/><path d="M199.6 1060.2 H206.4" stroke="#dce9f6" stroke-width="2.6" stroke-linecap="round"/><path d="M263 1034 Q263 1030 266 1029.6 L282 1029.4 Q284 1029.6 284.6 1031.4 L307 1032.6 Q309 1033 309 1036 V1070 Q309 1072 307 1072 H264.5 Q262.4 1072 262.4 1070 Z" fill="url(#tfold)" stroke="#d8ae3c" stroke-width="0.8"/><rect x="268" y="1031" width="14" height="4" fill="#fff"/><rect x="268" y="1031" width="3" height="3.4" fill="#2e9e48"/><path d="M274 1036 Q274 1033.6 276 1033.6 H291 Q293 1033.6 293.4 1036 V1040 H274 Z" fill="#f3d674" stroke="#d8ae3c" stroke-width="0.6"/><rect x="278.6" y="1034.4" width="13" height="4" fill="#fff"/><rect x="278.6" y="1034.4" width="3" height="3.4" fill="#e0342a"/><path d="M287 1040 Q287 1036.8 289.6 1036.8 H305 Q307.6 1036.8 307.6 1040 V1044 H287 Z" fill="#f3d674" stroke="#d8ae3c" stroke-width="0.6"/><rect x="291.6" y="1037.6" width="13" height="4" fill="#fff"/><rect x="291.6" y="1037.6" width="3" height="3.4" fill="#2a7fd4"/><path d="M262.4 1042 Q262.4 1039.6 265 1039.6 H286 L288.6 1042.6 H306.6 Q309 1042.6 309 1045 V1070 Q309 1072 307 1072 H264.5 Q262.4 1072 262.4 1070 Z" fill="url(#tfold2)" stroke="#dcb54a" stroke-width="0.7"/><path d="M267.6 1059 Q267.6 1056.4 270.4 1056.4 H299.4 Q302.2 1056.4 302.2 1059 V1072.4 Q302.2 1074.6 300 1074.6 H294 V1064.6 Q294 1063.4 292.8 1063.4 H278.8 Q277.6 1063.4 277.6 1064.6 V1074.6 H270 Q267.6 1074.6 267.6 1072.4 Z" fill="url(#tfblue)" stroke="#6fb4e0" stroke-width="0.8" opacity="0.93"/><circle cx="371" cy="1051.7" r="22" fill="#fbc931"/><path d="M371 1051.7 L351.95 1040.7 A22 22 0 0 1 390.05 1040.7 Z" fill="#de4c3f"/><path d="M351.95 1040.7 A22 22 0 0 1 390.05 1040.7 H371 Z" fill="#de4c3f"/><path d="M351.95 1040.7 A22 22 0 0 0 371 1073.7 L380.5 1057.2 L361.5 1057.2 Z" fill="#1f9d58"/><path d="M351.95 1040.7 L361.47 1057.2 L371 1073.7 A22 22 0 0 1 351.95 1040.7 Z" fill="#1f9d58"/><path d="M371 1051.7 L361.47 1057.2 L351.95 1040.7 L371 1040.7 Z" fill="#de4c3f"/><path d="M371 1051.7 L361.47 1057.2 L371 1073.7 L380.53 1057.2 Z" fill="#1f9d58"/><path d="M371 1073.7 A22 22 0 0 0 390.05 1040.7 H371 L380.53 1057.2 Z" fill="#fbc931"/><circle cx="371" cy="1051.7" r="10.2" fill="#fff"/><circle cx="371" cy="1051.7" r="8.2" fill="#4a8af4"/><path d="M467.0 1046.8 L470.5 1048.6 L470.0 1051.6 L466.1 1052.0 L465.0 1054.3 L467.2 1057.6 L465.2 1060.0 L461.6 1058.4 L459.5 1059.8 L459.7 1063.7 L456.8 1064.8 L454.5 1061.6 L452.0 1061.8 L450.2 1065.3 L447.2 1064.8 L446.8 1060.9 L444.5 1059.8 L441.2 1062.0 L438.8 1060.0 L440.4 1056.4 L439.0 1054.3 L435.1 1054.5 L434.0 1051.6 L437.2 1049.3 L437.0 1046.8 L433.5 1045.0 L434.0 1042.0 L437.9 1041.6 L439.0 1039.3 L436.8 1036.0 L438.8 1033.6 L442.4 1035.2 L444.5 1033.8 L444.3 1029.9 L447.2 1028.8 L449.5 1032.0 L452.0 1031.8 L453.8 1028.3 L456.8 1028.8 L457.2 1032.7 L459.5 1033.8 L462.8 1031.6 L465.2 1033.6 L463.6 1037.2 L465.0 1039.3 L468.9 1039.1 L470.0 1042.0 L466.8 1044.3 Z M461.6 1046.8 A9.6 9.6 0 1 0 442.4 1046.8 A9.6 9.6 0 1 0 461.6 1046.8 Z" fill="url(#tgear)" fill-rule="evenodd" stroke="#8fa4c4" stroke-width="0.7"/><circle cx="452" cy="1046.8" r="10.6" fill="none" stroke="#f2f5fa" stroke-width="1.4"/><path d="M478.0 1063.6 L480.1 1064.8 L479.6 1066.9 L477.2 1067.0 L476.3 1068.4 L477.1 1070.6 L475.4 1071.9 L473.5 1070.4 L471.9 1070.9 L471.1 1073.2 L468.9 1073.1 L468.4 1070.7 L466.9 1070.0 L464.8 1071.2 L463.2 1069.8 L464.4 1067.6 L463.6 1066.1 L461.2 1065.7 L461.0 1063.6 L463.3 1062.7 L463.6 1061.1 L462.1 1059.2 L463.2 1057.4 L465.6 1058.2 L466.9 1057.2 L466.9 1054.8 L468.9 1054.1 L470.2 1056.2 L471.9 1056.3 L473.4 1054.4 L475.4 1055.3 L475.1 1057.7 L476.3 1058.8 L478.7 1058.4 L479.6 1060.3 L477.8 1062.0 Z M474.6 1063.6 A4 4 0 1 0 466.6 1063.6 A4 4 0 1 0 474.6 1063.6 Z" fill="url(#tgear)" fill-rule="evenodd" stroke="#8fa4c4" stroke-width="0.7"/><path d="M525.4 1037 Q529 1032 533 1030.4 Q538 1029.4 542 1033.4 Q546 1037.6 552 1036.6 Q557 1035.4 560.6 1031.6 V1066.6 L553.6 1073.4 H525.4 Z" fill="#b4b4b4" stroke="#111" stroke-width="1"/><path d="M560.6 1031.6 V1066.6 L553.6 1073.4" fill="none" stroke="#000" stroke-width="2"/><path d="M552.4 1073 V1065.6 H560 Z" fill="#fff" stroke="#111" stroke-width="0.6"/><path d="M528 1036.6 H532 M534.6 1036.6 H543 M548.4 1036.6 H554" stroke="#000" stroke-width="1.5"/><path d="M528 1039.6 H532 M534.6 1039.6 H546 M548.4 1039.6 H556" stroke="#000" stroke-width="1.5"/><path d="M528 1042.6 H532 M534.6 1042.6 H546 M548.4 1042.6 H554" stroke="#000" stroke-width="1.5"/><path d="M528 1045.6 H532 M534.6 1045.6 H543 M548.4 1045.6 H556" stroke="#000" stroke-width="1.5"/><path d="M528 1048.6 H532 M534.6 1048.6 H546 M548.4 1048.6 H554" stroke="#000" stroke-width="1.5"/><path d="M528 1051.6 H532 M534.6 1051.6 H546 M548.4 1051.6 H556" stroke="#000" stroke-width="1.5"/><path d="M528 1054.6 H532 M534.6 1054.6 H543 M548.4 1054.6 H554" stroke="#000" stroke-width="1.5"/><path d="M528 1057.6 H532 M534.6 1057.6 H546 M548.4 1057.6 H556" stroke="#000" stroke-width="1.5"/><path d="M528 1060.6 H532 M534.6 1060.6 H546 M548.4 1060.6 H554" stroke="#000" stroke-width="1.5"/><path d="M528 1063.6 H532 M534.6 1063.6 H543 M548.4 1063.6 H556" stroke="#000" stroke-width="1.5"/><path d="M528 1066.6 H532 M534.6 1066.6 H546 M548.4 1066.6 H554" stroke="#000" stroke-width="1.5"/><path d="M528 1069.6 H532 M534.6 1069.6 H546 M548.4 1069.6 H556" stroke="#000" stroke-width="1.5"/><path d="M539 1050 H547 V1059 H552.6 L543 1069 L533.4 1059 H539 Z" fill="#000"/><rect x="606" y="1028.6" width="14.6" height="20" rx="2" fill="url(#tgold)" stroke="#a8740c" stroke-width="0.6"/><ellipse cx="613.3" cy="1029.6" rx="7" ry="1.6" fill="#fdeeb0"/><path d="M628 1030.6 H642.6 V1046" fill="none" stroke="#3a8a2c" stroke-width="2.2" stroke-dasharray="2.2 1.4"/><path d="M607.2 1056 V1065.4 H622.6" fill="none" stroke="#3a8a2c" stroke-width="2.2" stroke-dasharray="2.2 1.4"/><path d="M623.6 1053.4 L646.6 1074.4" stroke="#c9ccd4" stroke-width="3.2" stroke-linecap="round"/><path d="M623.6 1053.4 L646.6 1074.4" stroke="#7d828e" stroke-width="0.8" stroke-linecap="round"/><path d="M621.4 1053 Q620.4 1048.4 624.6 1047.4 L626 1051 L629 1050.4 L629.4 1047.2 Q633.4 1049 631.6 1053.6 Q628 1057.4 623 1055.4 Z" fill="#c9ccd4" stroke="#7d828e" stroke-width="0.7"/><path d="M644.6 1054.4 L625.6 1074.6" stroke="#d7a62a" stroke-width="3.4" stroke-linecap="round"/><path d="M637 1062.4 L625.6 1074.6" stroke="#8a6a1a" stroke-width="1" stroke-linecap="round"/><path d="M633.6 1049 Q640 1046.4 645 1050.6 L651.4 1058 Q652.4 1060.4 650 1060.6 L646 1059.4 L641.4 1053.6 Q638 1050.6 633.6 1051.6 Z" fill="#cfd3dc" stroke="#7d828e" stroke-width="0.7"/><rect x="692.6" y="1033.8" width="42.6" height="34.4" rx="1.2" fill="#000" stroke="#a9aab2" stroke-width="1.6"/><rect x="693.4" y="1034.4" width="41" height="2.6" fill="#c9cad2"/><path d="M694 1037 H734.4 V1040 Q708 1041 694 1054 Z" fill="#fff" opacity="0.22"/><text x="696.4" y="1046.4" font-family="Liberation Mono, monospace" font-weight="bold" font-size="8.2" fill="#fff" letter-spacing="0.9" style="filter:grayscale(1)">C:\_</text><rect x="777.8" y="1028.8" width="37.6" height="29" fill="#fff" stroke="#9a9cae" stroke-width="0.9"/><rect x="778.2" y="1029.2" width="36.8" height="2.8" fill="#d6d8e6"/><rect x="778.2" y="1033" width="36.8" height="1.4" fill="#b8bccf"/><rect x="778.4" y="1034.4" width="11" height="23" fill="#eceef4"/><rect x="789.4" y="1034.4" width="0.9" height="23" fill="#8288a6"/><rect x="780.4" y="1038" width="5.4" height="1.5" fill="#a0a4b4"/><rect x="780.4" y="1041.4" width="5.4" height="1.5" fill="#a0a4b4"/><rect x="780.4" y="1044.8" width="5.4" height="1.5" fill="#a0a4b4"/><rect x="780.4" y="1048.2" width="5.4" height="1.5" fill="#a0a4b4"/><path d="M794.6 1053 Q794.6 1048.4 798 1048.2 H803 Q806.4 1048.4 806.6 1053" fill="none" stroke="#1a1a1a" stroke-width="2"/><path d="M780.4 1052 L818 1053.6 Q819.8 1054 819.8 1056 V1069.6 Q819.6 1071.4 818 1071.8 L806 1074 Q793 1072.6 781.6 1069 Q780 1068.4 780 1066.6 Z" fill="url(#tred)"/><path d="M780.4 1052 L818 1053.6 L819.6 1056.6 L806 1059.6 L780.4 1055.6 Z" fill="#ee6464" opacity="0.75"/><rect x="786.6" y="1057.4" width="2.6" height="5.6" fill="#d8d8d8" stroke="#666" stroke-width="0.4"/><rect x="801.4" y="1060" width="2.6" height="5.6" fill="#d8d8d8" stroke="#666" stroke-width="0.4"/><circle cx="886.9" cy="1035" r="6.9" fill="#0079c2"/><circle cx="903.9" cy="1035" r="6.9" fill="#0079c2"/><circle cx="869.9" cy="1052" r="6.9" fill="#0079c2"/><circle cx="886.9" cy="1052" r="6.9" fill="#002b56"/><circle cx="903.9" cy="1052" r="6.9" fill="#0079c2"/><circle cx="869.9" cy="1069" r="6.9" fill="#0079c2"/><circle cx="886.9" cy="1069" r="6.9" fill="#0079c2"/><circle cx="1230.9" cy="1035" r="6.9" fill="#0079c2"/><circle cx="1247.9" cy="1035" r="6.9" fill="#0079c2"/><circle cx="1213.9" cy="1052" r="6.9" fill="#0079c2"/><circle cx="1230.9" cy="1052" r="6.9" fill="#002b56"/><circle cx="1247.9" cy="1052" r="6.9" fill="#0079c2"/><circle cx="1213.9" cy="1069" r="6.9" fill="#0079c2"/><circle cx="1230.9" cy="1069" r="6.9" fill="#0079c2"/><path d="M951 1043.6 L958.6 1040.4 L962 1042 V1064 L954.4 1066.6 L951 1065 Z" fill="url(#tsilver)" stroke="#8a8a8a" stroke-width="0.5"/><rect x="951.8" y="1045" width="1.6" height="3.4" fill="#50c030"/><ellipse cx="977.6" cy="1069.6" rx="11.4" ry="3.8" fill="#d2d2d2" stroke="#a2a2a2" stroke-width="0.5"/><path d="M973 1062 H982 L980.6 1069 H974.4 Z" fill="#c4c4c4"/><path d="M962.4 1034 L994.4 1038 V1064.6 L962.4 1059.6 Z" fill="#d8d8d8" stroke="#9a9a9a" stroke-width="0.8"/><path d="M964.4 1036.4 L992.4 1040 V1062 L964.4 1057.4 Z" fill="url(#tscr)"/><path d="M964.6 1049.6 L968 1050.4 L970.6 1041.6 L973.4 1052.6 L976.4 1049.6 L979.6 1056.6 L982 1046.6 L984.4 1055.6 L986.6 1050 L989 1054.4 L992 1052.6" fill="none" stroke="#2f83c6" stroke-width="1.2" stroke-linejoin="round"/><path d="M1036 1074 C1038.6 1052 1052 1034 1074 1030.2 Q1081.4 1029.6 1081.6 1031.4 C1074 1046 1074 1060 1080.6 1074.4 Z" fill="url(#tfin)"/><path d="M1036 1074 C1044 1068 1060 1066 1078.4 1068.6 L1080.6 1074.4 Z" fill="#9cc0ec" opacity="0.85"/><path d="M1037.4 1073.6 C1048 1069.6 1062 1068.8 1079.6 1071.4" fill="none" stroke="#e8f2fc" stroke-width="0.8" opacity="0.9"/><path d="M1040 1064 C1044 1048 1054 1036.6 1070 1032" fill="none" stroke="#6aa6f2" stroke-width="1.2" opacity="0.7"/><path d="M1122 1029.6 H1138.4 L1132.8 1035.2 L1141 1043.4 L1136 1048.4 L1127.8 1040.2 L1122 1046 Z" fill="#1c78ec"/><path d="M1135.6 1049 V1041.6 Q1135.6 1032.6 1144.4 1032.6 Q1153.4 1032.6 1153.4 1041.6 V1049" fill="none" stroke="#a9a9a9" stroke-width="3.8"/><path d="M1134.2 1049 V1041.6 Q1134.2 1031.2 1144.4 1031.2 Q1154.8 1031.2 1154.8 1041.6 V1049" fill="none" stroke="#6e6e6e" stroke-width="0.8"/><rect x="1131.2" y="1048" width="26.4" height="17.2" rx="1.6" fill="url(#tlock)" stroke="#222" stroke-width="0.6"/><path d="M1167 1073.6 H1150.2 L1155.8 1068 L1147.8 1060 L1153 1054.8 L1161 1062.8 L1167 1056.8 Z" fill="#18b818"/><path d="M1664 1056.4 L1669.6 1050 L1675.2 1056.4 Z" fill="#000"/><path d="M1701 1048 H1704.4 L1711.4 1042.4 V1064 L1704.4 1058.4 H1701 Z" fill="#fff" stroke="#e8e8e8" stroke-width="0.5"/><path d="M1705 1048.4 V1058" stroke="#a8a8a8" stroke-width="0.8"/><circle cx="1717" cy="1059" r="5.8" fill="#e01a1a"/><path d="M1714.4 1056.4 L1719.6 1061.6 M1719.6 1056.4 L1714.4 1061.6" stroke="#fff" stroke-width="1.7"/><rect x="1737.6" y="1042" width="2" height="22" fill="#fff"/><path d="M1739.6 1042.6 Q1745 1041 1749.6 1044.6 Q1754 1048 1760 1046.4 Q1758 1052 1757 1055.6 Q1751 1057 1747 1053.6 Q1743.4 1051 1739.6 1052.6 Z" fill="#fff"/><circle cx="1754" cy="1059" r="5.8" fill="#e01a1a"/><path d="M1751.4 1056.4 L1756.6 1061.6 M1756.6 1056.4 L1751.4 1061.6" stroke="#fff" stroke-width="1.7"/><g fill="none" stroke="#fff" stroke-width="2.1"><rect x="1773.4" y="1042.6" width="5" height="9.4" rx="1"/><path d="M1775.9 1052 V1061.6"/><path d="M1781.6 1046 H1794.6 V1056.6 H1779"/><path d="M1787.4 1056.6 V1061 M1781.4 1061.4 H1793.4"/></g><rect x="1775" y="1044.6" width="1.8" height="4" fill="#fff"/></svg><div class="t" style="left:1825.4px;top:1033px;font-size:18px;letter-spacing:-0.074px;">3:56 AM</div><div class="t" style="left:1817.4px;top:1058px;font-size:18px;letter-spacing:0.365px;">8/25/2020</div>

</body></html>
